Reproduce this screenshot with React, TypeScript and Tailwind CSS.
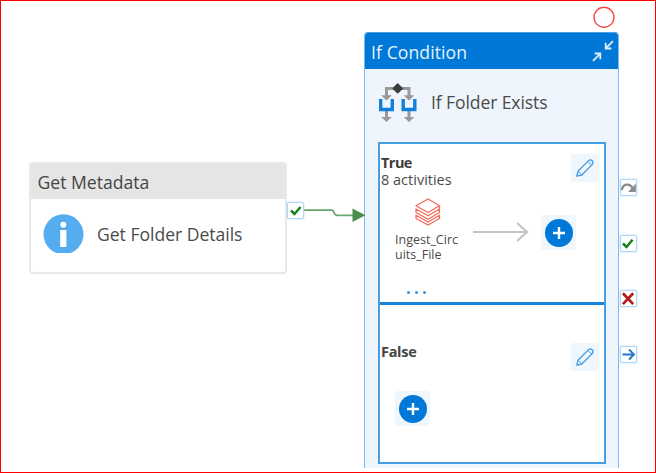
import React from "react";

const FONT = "font-['Open_Sans','Noto_Sans',sans-serif]";

function Port({ className, children }: { className: string; children: React.ReactNode }) {
  return (
    <div
      className={`absolute size-[17px] rounded-[2px] border border-[#b3d7f7] bg-white shadow-[0_0_2px_#a9d0f3] ${className}`}
    >
      <svg viewBox="0 0 15 15" className="block size-[15px]" fill="none">
        {children}
      </svg>
    </div>
  );
}

function Pencil() {
  return (
    <button className="grid size-7 shrink-0 place-items-center rounded-[3px] bg-[#eff6fc]">
      <svg viewBox="0 0 18 18" className="size-[18px]" fill="none" stroke="#4099e2" strokeWidth="1.3" strokeLinejoin="round">
        <path d="M.8 17.2 2 12.2 12.6 1.6Q14.4.2 16.2 1.8 17.8 3.6 16.4 5.4L5.8 16Z" />
        <path d="M2 12.2 5.8 16M12 2.500 15.500 6" strokeWidth="1" />
      </svg>
    </button>
  );
}

function AddButton() {
  return (
    <button className="grid size-[35px] shrink-0 place-items-center rounded-[3px] bg-[#eff6fc]">
      <svg viewBox="0 0 28 28" className="size-7">
        <circle cx="14" cy="14" r="14" fill="#0078d7" />
        <path d="M14 8v12M8 14h12" stroke="#fff" strokeWidth="2.4" />
      </svg>
    </button>
  );
}

function BranchIcon() {
  return (
    <svg viewBox="0 0 39 40" className="h-10 w-[39px] shrink-0" fill="none">
      <path d="M8.5 14V5.4H31V14" stroke="#999" strokeWidth="3" />
      <path d="M8.5 27v8M31 27v8" stroke="#999" strokeWidth="3" />
      <path d="M2.700 16V26.500H14.300V16M25.200 16V26.500H36.800V16" stroke="#1380da" strokeWidth="3.400" />
      <path d="M3.200 12.200h10.600l-5.300 5.300ZM25.700 12.200h10.600l-5.300 5.300ZM3.200 34h10.600l-5.300 5ZM25.700 34h10.600l-5.300 5Z" fill="#999" />
      <path d="m19.700 0 5.500 5.400-5.500 5.400-5.500-5.400Z" fill="#3b3b3b" />
    </svg>
  );
}

function LayersIcon() {
  return (
    <svg viewBox="0 0 26 28" className="h-7 w-[26px]" fill="none" stroke="#f4695c" strokeWidth="1.300" strokeLinejoin="round">
      <path d="M13 1 24.500 7.800 13 14.500 1 7.800Z" />
      <path d="M1 11 13 17.700 24.500 11V14.500L13 21.200 1 14.500Z" />
      <path d="M24.500 8V11" />
      <path d="M1 17.300 13 24 24.500 17.300V20.500L13 27 1 20.500Z" />
    </svg>
  );
}

function MetadataNode() {
  return (
    <section className="absolute left-[29px] top-[162px] flex h-28 w-[258px] flex-col overflow-hidden rounded-[4px] border-2 border-[#e8e8e8] bg-white">
      <header className="flex h-[35px] shrink-0 items-center bg-[#e5e5e5] pl-[6.500px] pt-px text-[17.600px] text-[#454545]">
        <span>Get Metadata</span>
      </header>
      <div className="flex h-[71px] items-center pl-3">
        <svg viewBox="0 0 41 39" className="mb-[3px] h-[39px] w-[41px] shrink-0">
          <circle cx="20.500" cy="20.300" r="20" fill="#55acee" />
          <circle cx="20.300" cy="10.800" r="3" fill="#fff" />
          <path d="M17.200 16h6.200v17h-6.200Z" fill="#fff" />
        </svg>
        <span className="pl-[13px] text-[17.600px] tracking-[-0.03px] text-[#4b4b4b]">Get Folder Details</span>
      </div>
    </section>
  );
}

function ConditionNode() {
  return (
    <section className="absolute left-[364px] top-8 flex h-[436px] w-[255px] flex-col overflow-hidden rounded-t-[4px] border-x border-t border-x-[#7cbaf0] border-t-[#4d9fe0] bg-[#eef5fc]">
      <header className="flex h-9 shrink-0 items-center justify-between bg-[#0078d7] pl-1.5 pr-1 text-[17.600px] text-[#e6f2fc]">
        <span className="pt-[2px] tracking-[0.080px]">If Condition</span>
        <svg viewBox="0 0 22 22" className="size-[22px]" fill="none" stroke="#deedfa" strokeWidth="1.800">
          <path d="M21 1.200 14 8.200M13.700 2.800v5.700h5.700M1 20.800 8 13.800M2.600 13.500h5.700v5.700" />
        </svg>
      </header>
      <div className="flex h-[73px] shrink-0 items-center pb-[6px] pl-[13px]">
        <BranchIcon />
        <span className="pl-3.5 text-[17.600px] tracking-[-0.120px] text-[#4b4b4b]">If Folder Exists</span>
      </div>
      <div className="ml-[13px] mr-3 flex h-[322px] shrink-0 flex-col border-2 border-[#459de3] bg-white">
        <div className="flex h-[158px] shrink-0 flex-col">
          <div className="flex h-[54px] justify-between pl-px pr-[5px] pt-[10px]">
            <div className="text-[14.500px] leading-[17px] text-[#4b4b4b]">
              <div className="font-bold tracking-[-0.550px] text-[#3b3b3b]">True</div>
              <div>8 activities</div>
            </div>
            <Pencil />
          </div>
          <div className="flex h-[68px]">
            <div className="ml-[15px] w-[68px] shrink-0">
              <div className="flex justify-center pr-[3px]">
                <LayersIcon />
              </div>
              <div className="pt-[6px] text-[12.500px] leading-[15px] text-[#4b4b4b]">
                Ingest_Circ
                <br />
                uits_File
              </div>
            </div>
            <svg viewBox="0 0 56 22" className="ml-[10px] mt-[23px] h-[22px] w-14 shrink-0" fill="none" stroke="#c8c6c4" strokeWidth="2.200">
              <path d="M0 11H53.500M44 2l10 9-10 9" />
            </svg>
            <div className="ml-3 mt-[17px]">
              <AddButton />
            </div>
          </div>
          <div className="mt-[25px] flex gap-[5px] pl-[27px]">
            <i className="size-[3px] rounded-full bg-[#3294e0]" />
            <i className="size-[3px] rounded-full bg-[#3294e0]" />
            <i className="size-[3px] rounded-full bg-[#3294e0]" />
          </div>
        </div>
        <div className="flex min-h-0 grow flex-col border-t-[3px] border-[#1684dc] pl-px pr-[5px]">
          <div className="flex justify-between pt-[38px]">
            <span className="-mt-px text-[14.500px] font-bold leading-5 tracking-[-0.300px] text-[#454545]">False</span>
            <Pencil />
          </div>
          <div className="pl-3.5 pt-5">
            <AddButton />
          </div>
        </div>
      </div>
    </section>
  );
}

export default function App() {
  return (
    <main className={`relative h-[473px] w-[656px] overflow-hidden border border-[#ff0000] bg-white ${FONT}`}>
      <div className="absolute -left-px -top-px h-[473px] w-[656px]">
        <MetadataNode />
        <ConditionNode />
        <svg viewBox="0 0 656 473" className="pointer-events-none absolute inset-0 size-full" fill="none">
          <path d="M304 210.200H332Q333.500 210.300 334 212.500T337 215.300H354" stroke="#69a66f" strokeWidth="1.700" />
          <path d="m352.500 208.500 13 6.800-13 6.800Z" fill="#488f50" />
          <circle cx="604" cy="17.300" r="10" stroke="#f94a4a" strokeWidth="1.400" />
        </svg>
        <Port className="left-[287px] top-[202px]">
          <path d="M3 7.500 6.500 11 12.500 4" stroke="#168016" strokeWidth="2.500" />
        </Port>
        <Port className="left-[620px] top-[179px]">
          <path d="M.8 10Q1.500 4.800 6 4.600 10 4.500 12 9" stroke="#8c8c8c" strokeWidth="2.400" />
          <path d="M14.800 3.500V12H7Z" fill="#8c8c8c" />
        </Port>
        <Port className="left-[620px] top-[235px]">
          <path d="M2 7.500 5.500 11 11.500 3.800" stroke="#168016" strokeWidth="2.500" />
        </Port>
        <Port className="left-[620px] top-[290px]">
          <path d="m1.900 2.200 10.300 10.900M12.200 2.200 1.900 13.100" stroke="#b51c1c" strokeWidth="2.700" />
        </Port>
        <Port className="left-[620px] top-[346px]">
          <path d="M1.500 7.500H12.500M8 2.500l5 5-5 5" stroke="#2376c9" strokeWidth="1.900" />
        </Port>
      </div>
    </main>
  );
}
